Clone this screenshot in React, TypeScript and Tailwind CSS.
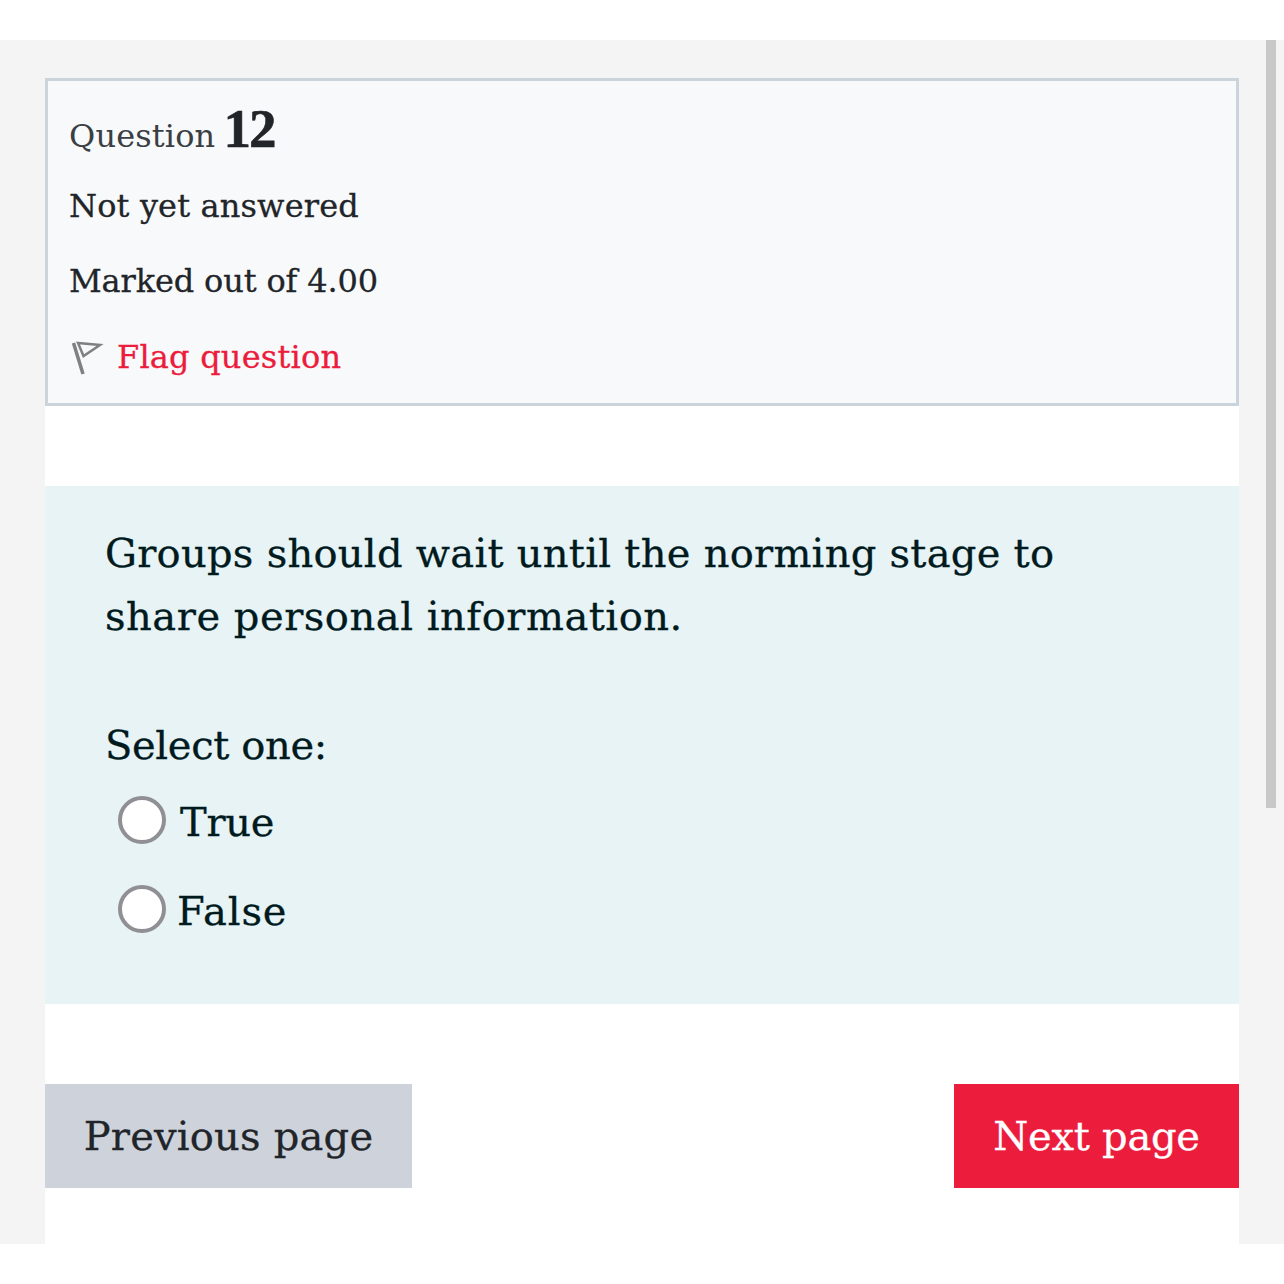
export default function App() {
  const serif = "font-['DejaVu_Serif','Liberation_Serif',serif]";
  return (
    <div className={`h-[1284px] w-[1284px] overflow-hidden bg-white pt-[40px] ${serif}`}>
      <div className="relative h-[1204px] bg-[#f4f4f4] pl-[45px] pr-[45px] pt-[38px]">
        <div className="absolute left-[1266px] top-0 h-[768px] w-[10px] bg-[#c8c8c8]" />
        <div className="h-[1166px] bg-white">
          <div className="h-[328px] border-[3px] border-[#cbd3db] bg-[#f8f9fa] pl-[21px] text-[#212529]">
            <div className="flex h-[102px] items-baseline pt-[18px]">
              <span className="text-[32px] leading-[60px] tracking-[0.15px] text-[#3a3f44]">Question</span>
              <span className="ml-[8px] font-['Liberation_Serif',serif] text-[55px] font-bold leading-[60px] tracking-[-2px] [-webkit-text-stroke:0.6px]">12</span>
            </div>
            <div className="text-[32px] leading-[46px] tracking-[0.15px] [-webkit-text-stroke:0.3px]">Not yet answered</div>
            <div className="mt-[29px] text-[32px] leading-[46px] tracking-[-0.15px] [-webkit-text-stroke:0.3px]">Marked out of 4.00</div>
            <div className="mt-[30px] flex items-center">
              <svg width="34" height="38" viewBox="0 0 34 38" className="ml-[2px]" fill="none" stroke="#808080">
                <path d="M2.5 5 L12 36" strokeWidth="3.5" />
                <path d="M7 5 L29 7 L12.5 18 Z" strokeWidth="2.5" strokeLinejoin="miter" />
              </svg>
              <span className="ml-[12px] text-[32px] leading-[46px] tracking-[0.2px] text-[#ec1c3c] [-webkit-text-stroke:0.3px]">Flag question</span>
            </div>
          </div>
          <div className="mt-[80px] h-[518px] bg-[#e7f3f5] pl-[60px] pt-[36px] text-[#001a1e]">
            <div className="text-[40px] leading-[63px] [-webkit-text-stroke:0.3px]">
              <div className="tracking-[0.27px]">Groups should wait until the norming stage to</div>
              <div className="tracking-[0.53px]">share personal information.</div>
            </div>
            <div className="mt-[66px] text-[40px] leading-[63px] tracking-[-0.35px] [-webkit-text-stroke:0.3px]">Select one:</div>
            <div className="mt-[13px] flex h-[64px] items-center pl-[13px]">
              <span className="mb-[4px] h-[48px] w-[48px] rounded-full border-[4px] border-[#8f8f94] bg-white" />
              <span className="ml-[14px] text-[40px] tracking-[-0.3px] [-webkit-text-stroke:0.3px]">True</span>
            </div>
            <div className="mt-[25px] flex h-[64px] items-center pl-[13px]">
              <span className="mb-[4px] h-[48px] w-[48px] rounded-full border-[4px] border-[#8f8f94] bg-white" />
              <span className="ml-[11px] text-[40px] tracking-[0.9px] [-webkit-text-stroke:0.3px]">False</span>
            </div>
          </div>
          <div className="mt-[80px] flex h-[104px] justify-between">
            <button className="h-full w-[367px] bg-[#ced3db] text-[40px] tracking-[0.2px] text-[#212529] [-webkit-text-stroke:0.3px]">Previous page</button>
            <button className="h-full w-[285px] bg-[#ec1c3c] text-[40px] tracking-[-0.25px] text-white [-webkit-text-stroke:0.3px]">Next page</button>
          </div>
        </div>
      </div>
    </div>
  );
}
